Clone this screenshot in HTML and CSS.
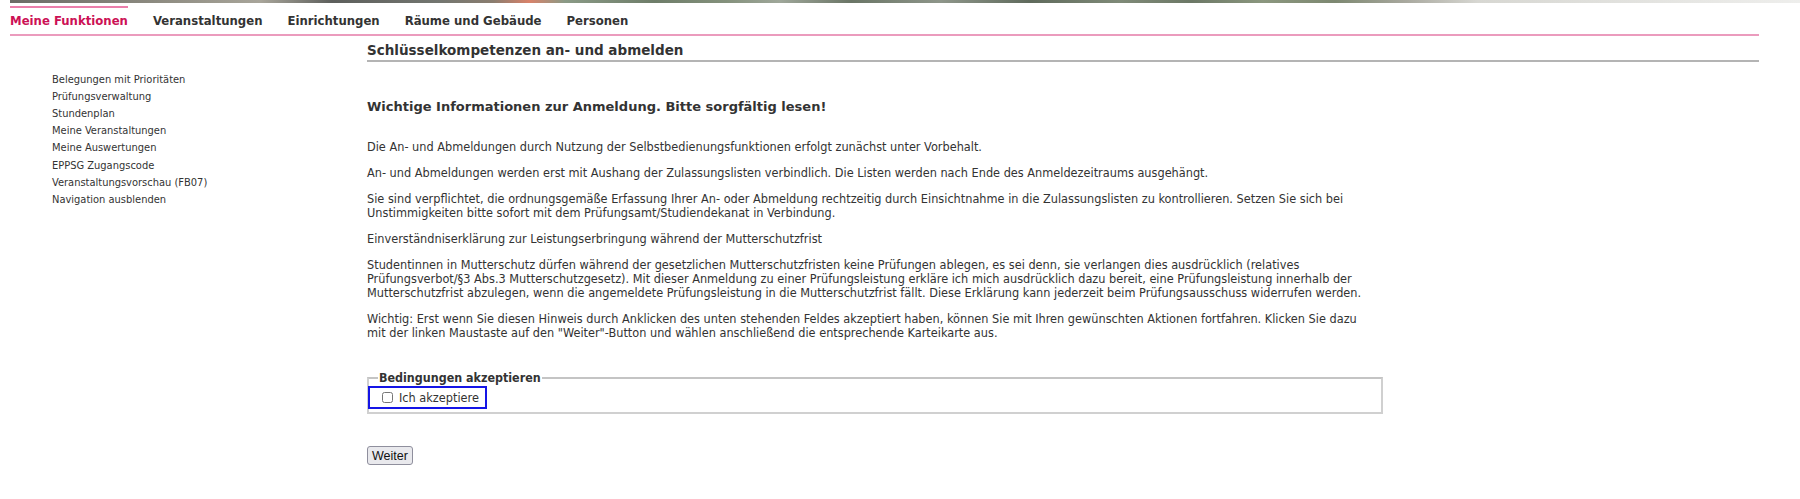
FILE: index.html
```html
<!DOCTYPE html>
<html lang="de">
<head>
<meta charset="utf-8">
<title>Schlüsselkompetenzen an- und abmelden</title>
<link rel="stylesheet" href="styles.css">
</head>
<body>
<div class="topstrip"></div>
<nav class="mainnav">
  <ul>
    <li class="active"><a href="#">Meine Funktionen</a></li>
    <li><a href="#">Veranstaltungen</a></li>
    <li><a href="#">Einrichtungen</a></li>
    <li><a href="#">Räume und Gebäude</a></li>
    <li><a href="#">Personen</a></li>
  </ul>
</nav>
<div class="page">
  <aside class="sidebar">
    <ul>
      <li><a href="#">Belegungen mit Prioritäten</a></li>
      <li><a href="#">Prüfungsverwaltung</a></li>
      <li><a href="#">Stundenplan</a></li>
      <li><a href="#">Meine Veranstaltungen</a></li>
      <li><a href="#">Meine Auswertungen</a></li>
      <li><a href="#">EPPSG Zugangscode</a></li>
      <li><a href="#">Veranstaltungsvorschau (FB07)</a></li>
      <li><a href="#">Navigation ausblenden</a></li>
    </ul>
  </aside>
  <main class="content">
    <h1 class="title">Schlüsselkompetenzen an- und abmelden</h1>
    <div class="inner">
      <h2 class="subtitle">Wichtige Informationen zur Anmeldung. Bitte sorgfältig lesen!</h2>
      <p>Die An- und Abmeldungen durch Nutzung der Selbstbedienungsfunktionen erfolgt zunächst unter Vorbehalt.</p>
      <p>An- und Abmeldungen werden erst mit Aushang der Zulassungslisten verbindlich. Die Listen werden nach Ende des Anmeldezeitraums ausgehängt.</p>
      <p>Sie sind verpflichtet, die ordnungsgemäße Erfassung Ihrer An- oder Abmeldung rechtzeitig durch Einsichtnahme in die Zulassungslisten zu kontrollieren. Setzen Sie sich bei Unstimmigkeiten bitte sofort mit dem Prüfungsamt/Studiendekanat in Verbindung.</p>
      <p>Einverständniserklärung zur Leistungserbringung während der Mutterschutzfrist</p>
      <p>Studentinnen in Mutterschutz dürfen während der gesetzlichen Mutterschutzfristen keine Prüfungen ablegen, es sei denn, sie verlangen dies ausdrücklich (relatives Prüfungsverbot/§3 Abs.3 Mutterschutzgesetz). Mit dieser Anmeldung zu einer Prüfungsleistung erkläre ich mich ausdrücklich dazu bereit, eine Prüfungsleistung innerhalb der Mutterschutzfrist abzulegen, wenn die angemeldete Prüfungsleistung in die Mutterschutzfrist fällt. Diese Erklärung kann jederzeit beim Prüfungsausschuss widerrufen werden.</p>
      <p>Wichtig: Erst wenn Sie diesen Hinweis durch Anklicken des unten stehenden Feldes akzeptiert haben, können Sie mit Ihren gewünschten Aktionen fortfahren. Klicken Sie dazu mit der linken Maustaste auf den "Weiter"-Button und wählen anschließend die entsprechende Karteikarte aus.</p>
      <form class="accept">
        <fieldset class="terms">
          <legend>Bedingungen akzeptieren</legend>
          <label class="check"><input type="checkbox"> Ich akzeptiere</label>
        </fieldset>
        <button type="button" class="btn">Weiter</button>
      </form>
    </div>
  </main>
</div>
</body>
</html>
```
FILE: styles.css
```css
html, body {
  margin: 0;
  padding: 0;
  background: #fff;
}
body {
  font-family: "DejaVu Sans Condensed", "DejaVu Sans", sans-serif;
  font-size: 12.6px;
  color: #333;
}
a {
  color: inherit;
  text-decoration: none;
}
ul {
  list-style: none;
  margin: 0;
  padding: 0;
}
.topstrip {
  height: 3px;
  margin: 0 0 0 10px;
  background: linear-gradient(90deg,
    #6b6b66 0%, #8c8a80 8%, #a8a59a 14%, #5d5f5c 18%, #737670 24%,
    #8a7d6f 27%, #d9826a 29%, #8a9a86 31%, #6e7d69 36%, #84917c 40%,
    #9fa79a 43%, #6a7566 47%, #8e968a 52%, #5f6a5c 57%, #7f8a78 62%,
    #6c7866 66%, #8b977f 70%, #7d8871 74%, #a9a99f 78%, #d7d7d2 82%, #eeeeec 100%);
}
.mainnav {
  margin: 0 41px 0 10px;
  border-bottom: 2px solid #eb9bbd;
}
.mainnav ul {
  display: flex;
  gap: 25px;
}
.mainnav li {
  border-top: 2px solid transparent;
  margin-top: 3px;
}
.mainnav li.active {
  border-top-color: #eb7fab;
}
.mainnav a {
  display: block;
  padding: 5px 0;
  line-height: 16px;
  font-family: "DejaVu Sans", sans-serif;
  font-weight: bold;
  font-size: 11.7px;
  color: #333;
}
.mainnav li.active a {
  color: #cc1155;
}
.page {
  display: flex;
  margin: 0 41px 0 10px;
}
.sidebar {
  width: 357px;
  flex: none;
  padding: 34.5px 0 0 42px;
  box-sizing: border-box;
}
.sidebar li {
  line-height: 17.2px;
  font-size: 11px;
  color: #333;
}
.content {
  flex: 1;
  padding-top: 6px;
}
.title {
  margin: 0;
  font-family: "DejaVu Sans", sans-serif;
  font-size: 13.5px;
  font-weight: bold;
  line-height: 16px;
  padding-bottom: 2px;
  border-bottom: 2px solid #b4b4b4;
  color: #333;
}
.inner {
  width: 1016px;
}
.subtitle {
  margin: 37px 0 0;
  font-family: "DejaVu Sans", sans-serif;
  font-size: 13px;
  line-height: 16px;
  font-weight: bold;
  color: #333;
}
.inner p {
  margin: 25px 0 0;
  max-width: 998px;
  line-height: 14px;
}
.inner p + p {
  margin-top: 12px;
}
.accept {
  margin-top: 31px;
}
.terms {
  margin: 0;
  padding: 0 0 5px 1px;
  border: 2px solid #d0d0d0;
  border-top-color: #c4c4c4;
}
.terms legend {
  padding: 0 1px;
  margin-left: 8px;
  font-weight: bold;
  font-size: 12.4px;
  line-height: 14px;
}
.check {
  display: flex;
  width: fit-content;
  align-items: center;
  gap: 6px;
  height: 19px;
  margin-top: 3px;
  padding: 0 6px 0 12px;
  outline: 2px solid #1515e6;
  outline-offset: 0;
}
.check input {
  margin: 0;
  width: 11px;
  height: 11px;
}
.btn {
  display: block;
  margin-top: 32px;
  height: 19px;
  padding: 0 4px;
  font-family: "Liberation Sans", Arial, sans-serif;
  font-size: 12.5px;
  color: #111;
  background: #e9e9ed;
  border: 1px solid #8f8f9d;
  border-radius: 3px;
}
```
